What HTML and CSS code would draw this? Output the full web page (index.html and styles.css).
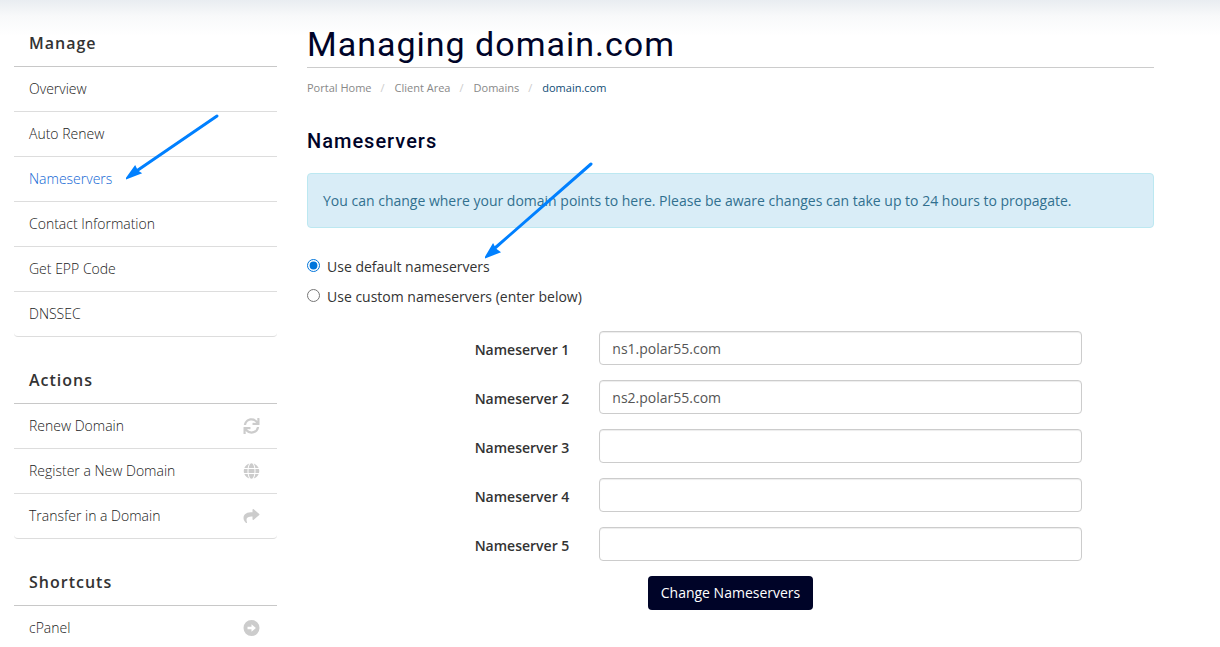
FILE: index.html
```html
<!DOCTYPE html>
<html lang="en">
<head>
  <meta charset="UTF-8">
  <meta name="viewport" content="width=device-width, initial-scale=1.0">
  <title>Managing domain.com</title>
  <link rel="stylesheet" href="styles.css">
</head>
<body>
  <div class="page">
    <!-- Sidebar -->
    <aside class="sidebar">
      <nav class="panel">
        <h3>Manage</h3>
        <a href="#">Overview</a>
        <a href="#">Auto Renew</a>
        <a href="#" class="active">Nameservers</a>
        <a href="#">Contact Information</a>
        <a href="#">Get EPP Code</a>
        <a href="#">DNSSEC</a>
      </nav>
      <nav class="panel">
        <h3>Actions</h3>
        <a href="#">Renew Domain
          <svg class="icon" viewBox="0 0 512 512" aria-hidden="true"><path d="M440.65 12.57l4 82.77A247.16 247.16 0 0 0 255.83 8C134.73 8 33.91 94.92 12.29 209.82A12 12 0 0 0 24.09 224h49.05a12 12 0 0 0 11.67-9.26 175.91 175.91 0 0 1 317-56.94l-101.46-4.86a12 12 0 0 0-12.57 12v47.41a12 12 0 0 0 12 12H500a12 12 0 0 0 12-12V12a12 12 0 0 0-12-12h-47.37a12 12 0 0 0-11.98 12.57zM255.83 432a175.61 175.61 0 0 1-146-77.8l101.8 4.87a12 12 0 0 0 12.57-12v-47.4a12 12 0 0 0-12-12H12a12 12 0 0 0-12 12V500a12 12 0 0 0 12 12h47.35a12 12 0 0 0 12-12.6l-4.15-82.57A247.17 247.17 0 0 0 255.83 504c121.11 0 221.93-86.92 243.55-201.82a12 12 0 0 0-11.8-14.18h-49.05a12 12 0 0 0-11.67 9.26A175.86 175.86 0 0 1 255.83 432z"/></svg>
        </a>
        <a href="#">Register a New Domain
          <svg class="icon" viewBox="0 0 496 512" aria-hidden="true"><path d="M336.5 160C322 70.7 287.8 8 248 8s-74 62.7-88.5 152h177zM152 256c0 22.2 1.2 43.5 3.3 64h185.3c2.1-20.5 3.3-41.8 3.3-64s-1.2-43.5-3.3-64H155.3c-2.1 20.5-3.3 41.8-3.3 64zm324.7-96c-28.6-67.9-86.5-120.4-158-141.6 24.4 33.8 41.2 84.7 50 141.6h108zM177.2 18.4C105.8 39.6 47.8 92.1 19.3 160h108c8.7-56.9 25.5-107.8 49.9-141.6zM487.4 192H372.7c2.1 21 3.3 42.5 3.3 64s-1.2 43-3.3 64h114.6c5.5-20.5 8.6-41.8 8.6-64s-3.1-43.5-8.5-64zM120 256c0-21.5 1.2-43 3.3-64H8.6C3.2 212.5 0 233.8 0 256s3.2 43.5 8.6 64h114.6c-2-21-3.2-42.5-3.2-64zm39.5 96c14.5 89.3 48.7 152 88.5 152s74-62.7 88.5-152h-177zm159.3 141.6c71.4-21.2 129.4-73.7 158-141.6h-108c-8.8 56.9-25.6 107.8-50 141.6zM19.3 352c28.6 67.9 86.5 120.4 158 141.6-24.4-33.8-41.2-84.7-50-141.6h-108z"/></svg>
        </a>
        <a href="#">Transfer in a Domain
          <svg class="icon" viewBox="0 0 512 512" aria-hidden="true"><path d="M503.691 189.836L327.687 37.851C312.281 24.546 288 35.347 288 56.015v80.053C127.371 137.907 0 170.1 0 322.326c0 61.441 39.581 122.309 83.333 154.132 13.653 9.931 33.111-2.533 28.077-18.631C66.066 312.814 132.917 274.316 288 272.085V360c0 20.7 24.3 31.453 39.687 18.164l176.004-152c11.071-9.562 11.086-26.753 0-36.328z"/></svg>
        </a>
      </nav>
      <nav class="panel">
        <h3>Shortcuts</h3>
        <a href="#">cPanel
          <svg class="icon" viewBox="0 0 16 16" aria-hidden="true"><path fill-rule="evenodd" d="M8 0a8 8 0 1 0 0 16A8 8 0 0 0 8 0zM4 6.8h4V4.2L12.4 8 8 11.8V9.2H4z"/></svg>
        </a>
      </nav>
    </aside>

    <!-- Main content -->
    <main class="content">
      <h1>Managing domain.com</h1>
      <ol class="breadcrumb">
        <li><a href="#">Portal Home</a></li>
        <li><a href="#">Client Area</a></li>
        <li><a href="#">Domains</a></li>
        <li class="current">domain.com</li>
      </ol>

      <h2>Nameservers</h2>
      <div class="alert">You can change where your domain points to here. Please be aware changes can take up to 24 hours to propagate.</div>

      <form>
        <div class="radio">
          <input type="radio" name="nschoice" id="nsDefault" checked>
          <label for="nsDefault">Use default nameservers</label>
        </div>
        <div class="radio">
          <input type="radio" name="nschoice" id="nsCustom">
          <label for="nsCustom">Use custom nameservers (enter below)</label>
        </div>

        <div class="fields">
          <div class="form-group">
            <label for="ns1">Nameserver 1</label>
            <input type="text" id="ns1" value="ns1.polar55.com">
          </div>
          <div class="form-group">
            <label for="ns2">Nameserver 2</label>
            <input type="text" id="ns2" value="ns2.polar55.com">
          </div>
          <div class="form-group">
            <label for="ns3">Nameserver 3</label>
            <input type="text" id="ns3">
          </div>
          <div class="form-group">
            <label for="ns4">Nameserver 4</label>
            <input type="text" id="ns4">
          </div>
          <div class="form-group">
            <label for="ns5">Nameserver 5</label>
            <input type="text" id="ns5">
          </div>
        </div>
        <div class="form-actions">
          <button type="submit">Change Nameservers</button>
        </div>
      </form>
    </main>
  </div>

  <!-- Pointer arrows drawn over the page -->
  <svg class="arrow arrow-menu" viewBox="0 0 94 66" aria-hidden="true">
    <path class="shaft" d="M91 2L12 56"/>
    <path class="head" d="M1 64L9 53L11 57L14 59Z"/>
  </svg>
  <svg class="arrow arrow-option" viewBox="0 0 110 98" aria-hidden="true">
    <path class="shaft" d="M106 2L10 86"/>
    <path class="head" d="M1 95L8 83L10 87L14 90Z"/>
  </svg>
</body>
</html>
```
FILE: styles.css
```css
* {
  box-sizing: border-box;
  margin: 0;
  padding: 0;
}
body {
  position: relative;
  font-family: 'Open Sans', sans-serif;
  font-size: 14px;
  line-height: 24px;
  color: #333;
  background: #fff linear-gradient(#e9edf1, #f8f9fa 16px, #fff 36px) no-repeat;
}
a {
  color: inherit;
  text-decoration: none;
}
h1, h2, h3 {
  letter-spacing: 1px;
}
.page {
  display: flex;
  gap: 30px;
  padding: 21px 66px 0 14px;
}

/* Sidebar */
.sidebar {
  flex: 0 0 263px;
}
.panel {
  margin-bottom: 21px;
}
.panel h3 {
  padding: 10px 15px;
  border-bottom: 1px solid #c8c8c8;
  font-size: 16px;
  font-weight: 600;
  line-height: 25px;
}
.panel a {
  display: flex;
  align-items: center;
  justify-content: space-between;
  padding: 10px 17px 10px 15px;
  border-bottom: 1px solid #ddd;
  font-weight: 300;
  color: #222;
}
.panel a:last-child {
  border-radius: 0 0 4px 4px;
}
.panel a.active {
  color: #0f66d4;
}
.icon {
  width: 17px;
  height: 16px;
  fill: #ccc;
}

/* Main content */
.content {
  flex: 1;
  min-width: 0;
}
h1, h2 {
  font-family: 'Roboto', sans-serif;
  color: #000428;
}
h1 {
  border-bottom: 1px solid #ccc;
  font-size: 34px;
  font-weight: 400;
  line-height: 46px;
}
h2 {
  margin: 29px 0 20px;
  font-size: 20px;
  font-weight: 500;
}
.breadcrumb {
  display: flex;
  padding-top: 8px;
  list-style: none;
  font-size: 11px;
  color: #888;
}
.breadcrumb li + li::before {
  content: "/";
  padding: 0 10px 0 9px;
  color: #ccc;
}
.breadcrumb .current {
  color: #0f4c75;
}
.alert {
  margin-bottom: 27px;
  padding: 15px;
  border: 1px solid #bce8f1;
  border-radius: 4px;
  background: #d9edf7;
  line-height: 23px;
  color: #31708f;
}

/* Form */
.radio {
  display: flex;
  align-items: flex-start;
  gap: 7px;
  margin-bottom: 6px;
}
.radio input {
  width: 13px;
  height: 13px;
  margin-top: 4px;
  accent-color: #0075db;
}
.fields {
  margin: 22px -15px 0;
}
.form-group {
  display: flex;
  margin-bottom: 15px;
}
.form-group label {
  width: 33.333%;
  padding: 7px 15px 0 0;
  text-align: right;
  font-weight: 600;
}
.form-group input {
  width: 55%;
  height: 34px;
  margin-left: 15px;
  padding: 6px 12px;
  border: 1px solid #ccc;
  border-radius: 4px;
  box-shadow: inset 0 1px 1px rgba(0,0,0,0.075);
  font: inherit;
  color: #555;
}
.form-actions {
  text-align: center;
}
button {
  height: 34px;
  padding: 0 13px;
  border: none;
  border-radius: 4px;
  background: #000428;
  color: #fff;
  font: inherit;
  cursor: pointer;
}

/* Arrows */
.arrow {
  position: absolute;
  pointer-events: none;
}
.arrow-menu {
  left: 126px;
  top: 114px;
  width: 94px;
  height: 66px;
}
.arrow-option {
  left: 485px;
  top: 162px;
  width: 110px;
  height: 98px;
}
.shaft {
  fill: none;
  stroke: #0080ff;
  stroke-width: 3;
  stroke-linecap: round;
}
.head {
  fill: #0080ff;
  stroke: #0080ff;
  stroke-width: 2;
}
```
